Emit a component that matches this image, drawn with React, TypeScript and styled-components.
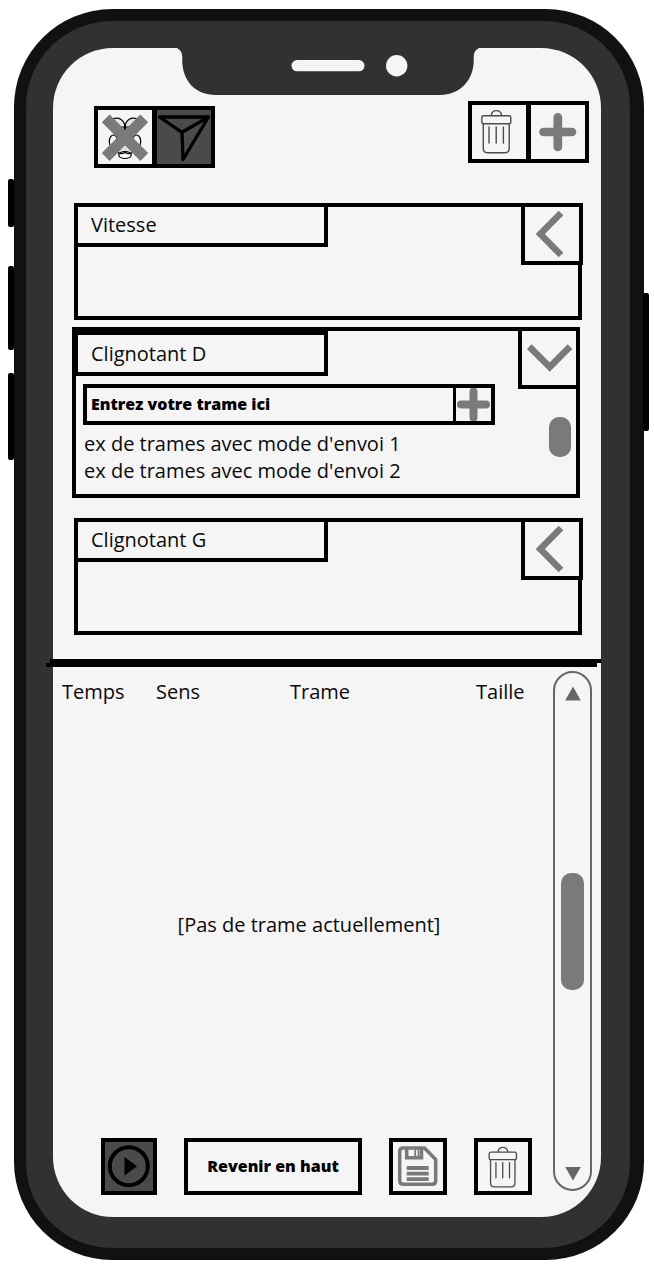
import React, { useState } from "react";
import styled, { createGlobalStyle } from "styled-components";

const GlobalStyle = createGlobalStyle`
  *, *::before, *::after { box-sizing: border-box; }
  body {
    margin: 0;
    background: #ffffff;
    color: #0a0a0a;
    font-family: "Open Sans", "Noto Sans", sans-serif;
    font-size: 20px;
    line-height: 27px;
  }
  button, input { font: inherit; color: inherit; }
`;

const GREY = "#7a7a7a";
const PAPER = "#f5f5f5";

const Page = styled.div`
  padding: 9px 10px 8px 14px;
`;

const Phone = styled.div`
  position: relative;
  border-radius: 98px;
  background: #111111;
  padding: 12px 14px 12px 12px;
`;

const Bezel = styled.div`
  border-radius: 86px;
  background: #313131;
  padding: 27px 29px 31px 27px;
`;

const SideKey = styled.span<{ $side: "left" | "right"; $top: number; $height: number }>`
  position: absolute;
  ${(p) => p.$side}: ${(p) => (p.$side === "left" ? -6 : -5)}px;
  top: ${(p) => p.$top}px;
  width: 6px;
  height: ${(p) => p.$height}px;
  border-radius: 2px;
  background: #000000;
`;

const Screen = styled.main`
  display: flex;
  flex-direction: column;
  border-radius: 60px;
  background: ${PAPER};
`;

const NotchArt = styled.svg`
  display: block;
  align-self: center;
  width: 308px;
  height: 47px;
  overflow: visible;
`;

const Toolbar = styled.header`
  display: flex;
  justify-content: space-between;
  align-items: flex-start;
  padding: 6px 12px 35px 41px;
`;

const ToolGroup = styled.div<{ $lowered?: boolean }>`
  display: flex;
  padding-top: ${(p) => (p.$lowered ? 5 : 0)}px;
  & > button + button { margin-left: -3px; }
`;

const IconButton = styled.button<{ $width?: number; $height?: number; $dark?: boolean }>`
  flex: none;
  display: block;
  width: ${(p) => p.$width ?? 62}px;
  height: ${(p) => p.$height ?? 62}px;
  padding: 0;
  border: 4px solid #000000;
  background: ${(p) => (p.$dark ? "#4a4a4a" : PAPER)};
  cursor: pointer;
  & > svg { display: block; width: 100%; height: 100%; }
`;

const CardList = styled.section`
  display: flex;
  flex-direction: column;
  padding: 0 19px 24px 21px;
`;

const Card = styled.article<{ $open: boolean }>`
  min-height: ${(p) => (p.$open ? 171 : 117)}px;
  margin: ${(p) => (p.$open ? "7px 2px 20px -2px" : "0")};
  border: 4px solid #000000;
`;

const CardHead = styled.div<{ $open: boolean }>`
  display: flex;
  justify-content: space-between;
  align-items: flex-start;
  height: ${(p) => (p.$open ? 53 : 58)}px;
  margin: ${(p) => (p.$open ? "-4px -4px 0 -2px" : "-4px -5px 0 -4px")};
`;

const CardTitle = styled.h2<{ $open: boolean }>`
  width: 254px;
  margin: ${(p) => (p.$open ? 4 : 0)}px 0 0;
  padding: 5px 13px;
  border: 4px solid #000000;
  font-size: 20px;
  font-weight: 400;
  line-height: ${(p) => (p.$open ? 27 : 26)}px;
`;

const CardBody = styled.div`
  display: flex;
  justify-content: space-between;
  padding: 4px 5px 8px 7px;
`;

const FrameColumn = styled.div`
  flex: 1;
  max-width: 412px;
`;

const FrameEntry = styled.div`
  display: flex;
  height: 41px;
  border: 4px solid #000000;
`;

const FrameInput = styled.input`
  flex: 1;
  min-width: 0;
  padding: 0 4px;
  border: 0;
  outline: 0;
  background: transparent;
  font-size: 16px;
  font-weight: 800;
  &::placeholder { color: #000000; opacity: 1; }
`;

const AddFrame = styled.button`
  flex: none;
  width: 38px;
  padding: 0;
  border: 0;
  border-left: 3px solid #000000;
  background: ${PAPER};
  & > svg { display: block; width: 100%; height: 100%; }
`;

const Examples = styled.ul`
  margin: 5px 0 0;
  padding: 0 0 0 1px;
  list-style: none;
`;

const CardThumb = styled.span`
  width: 22px;
  height: 40px;
  margin-top: 33px;
  border-radius: 10px;
  background: ${GREY};
`;

const Divider = styled.div`
  margin: 0 0 4px -7px;
  &::before, &::after {
    content: "";
    display: block;
    height: 4px;
    background: #000000;
  }
  &::before { margin-left: 4px; }
  &::after { margin-right: 4px; }
`;

const LogPanel = styled.section`
  display: flex;
  min-height: 520px;
  padding: 0 9px;
  margin-bottom: 26px;
`;

const LogMain = styled.div`
  flex: 1;
  display: flex;
  flex-direction: column;
`;

const LogTable = styled.table`
  flex: 1;
  width: 100%;
  table-layout: fixed;
  border-collapse: collapse;
`;

const Th = styled.th<{ $width?: number }>`
  width: ${(p) => (p.$width ? `${p.$width}px` : "auto")};
  height: 41px;
  padding: 0;
  font-weight: 400;
  text-align: left;
`;

const Empty = styled.td`
  height: 426px;
  padding: 0 0 2px 3px;
  text-align: center;
`;

const Footer = styled.footer`
  display: flex;
  justify-content: space-between;
  padding: 0 21px 0 39px;
  margin-bottom: -4px;
`;

const TopButton = styled.button`
  width: 178px;
  height: 57px;
  padding: 0;
  border: 4px solid #000000;
  background: ${PAPER};
  color: #000000;
  font-size: 16px;
  font-weight: 800;
`;

const ScrollRail = styled.div`
  flex: none;
  display: flex;
  flex-direction: column;
  align-items: center;
  justify-content: space-between;
  width: 39px;
  border: 2px solid #666666;
  border-radius: 20px;
`;

const ArrowButton = styled.button`
  display: block;
  width: 30px;
  height: 34px;
  padding: 0;
  border: 0;
  background: transparent;
  & > svg { display: block; }
`;

const RailThumb = styled.span`
  width: 23px;
  height: 117px;
  border-radius: 10px;
  background: ${GREY};
`;

function Notch() {
  return (
    <NotchArt viewBox="173 48 308 47" aria-hidden="true">
      <path
        d="M174 47.500C179 48 182 51 182.300 57C181 79 194 95 216 95H440C461 95 475 79 473.700 57C473.800 51 477 48 482 47.500Z"
        fill="#313131"
      />
      <rect x="291.500" y="60" width="73" height="11.300" rx="5.600" fill={PAPER} />
      <circle cx="396.700" cy="65.700" r="10.700" fill={PAPER} />
    </NotchArt>
  );
}

function CrossedBerryIcon() {
  return (
    <svg viewBox="4 4 54 54" fill="none">
      <g stroke="#000" strokeWidth="1.200">
        <path d="M31 21C30.500 14 25 10.500 19 12.800C20 19 25 22 31 21Z" fill="#e6e6e6" />
        <path d="M31 21C31.500 14 37 10.500 43 12.800C42 19 37 22 31 21Z" fill="#e6e6e6" />
        <path d="M31 18V24" strokeWidth="2" />
        <ellipse cx="19.500" cy="35.500" rx="4.200" ry="6.500" />
        <ellipse cx="42.500" cy="35.500" rx="4.200" ry="6.500" />
        <path d="M24 47L31 41L38 47Z" fill="#dcdcdc" stroke="none" />
        <ellipse cx="31" cy="49" rx="6.200" ry="3.500" />
        <path d="M23 46Q26 49 31 46.500Q36 49 39 46" />
      </g>
      <path d="M11.700 12.300L50.300 51M50.300 12.300L11.700 51" stroke={GREY} strokeWidth="11" />
    </svg>
  );
}

function SendIcon() {
  return (
    <svg viewBox="4 4 54 54" fill="none" stroke="#000" strokeWidth="3.300" strokeLinejoin="round" strokeLinecap="round">
      <path d="M6.500 11H55.500L30 53.500L29 26.300ZM29 26.300L55.500 11" />
    </svg>
  );
}

function TrashIcon({ box = "4 4 54 54" }: { box?: string }) {
  return (
    <svg viewBox={box} fill="none" stroke="#4d4d4d" strokeWidth="1.400" strokeLinecap="round">
      <path d="M23.300 14.500C23.800 8 33 8 33.600 14.500" />
      <rect x="13.800" y="14.700" width="29" height="8" rx="2" />
      <path d="M15.300 22.700V47.500Q15.300 51.700 19.500 51.700H37Q41.200 51.700 41.200 47.500V22.700" />
      <path d="M21 26V42M28.200 26V42M35.400 26V42" />
    </svg>
  );
}

function PlusIcon() {
  return (
    <svg viewBox="4 4 54 54" stroke={GREY} strokeWidth="8.700" strokeLinecap="round">
      <path d="M16.500 31H45M30.800 16.300V46" />
    </svg>
  );
}

function SmallPlusIcon() {
  return (
    <svg viewBox="0 0 35 33" stroke={GREY} strokeWidth="8" strokeLinecap="round">
      <path d="M5 16.500H30M17.500 3.500V29.500" />
    </svg>
  );
}

function ChevronIcon({ open }: { open: boolean }) {
  return (
    <svg viewBox="4 4 54 54" fill="none" stroke={GREY} strokeWidth="6.600">
      <path d={open ? "M11.300 19.700L31.700 40L52 19.700" : "M40 10L19.300 31L40 52"} />
    </svg>
  );
}

function PlayIcon() {
  return (
    <svg viewBox="4 4 48 49">
      <circle cx="27.800" cy="28.200" r="19" fill="none" stroke="#000" strokeWidth="4" />
      <path d="M23.500 19L36 28.200L23.500 37.500Z" fill="#000" />
    </svg>
  );
}

function SaveIcon() {
  return (
    <svg viewBox="4 4 50 49" fill="none" stroke={GREY}>
      <path
        d="M14 10H35.500L46.700 21.500V42.500Q46.700 46.300 43 46.300H14.500Q10.700 46.300 10.700 42.500V13.500Q10.700 10 14 10Z"
        strokeWidth="3.500"
      />
      <path d="M17.700 10V19.700H32.500V10" strokeWidth="3.500" />
      <path d="M26.200 10V19M29.500 10V19" strokeWidth="1.800" />
      <path d="M17.700 30H39.700M17.700 35.700H39.700M17.700 41.200H39.700" strokeWidth="3.800" />
    </svg>
  );
}

const examples = ["ex de trames avec mode d'envoi 1", "ex de trames avec mode d'envoi 2"];

function SignalCard({ title, initiallyOpen = false }: { title: string; initiallyOpen?: boolean }) {
  const [open, setOpen] = useState(initiallyOpen);
  return (
    <Card $open={open}>
      <CardHead $open={open}>
        <CardTitle $open={open}>{title}</CardTitle>
        <IconButton
          type="button"
          aria-label={title}
          aria-expanded={open}
          onClick={() => setOpen(!open)}
        >
          <ChevronIcon open={open} />
        </IconButton>
      </CardHead>
      {open && (
        <CardBody>
          <FrameColumn>
            <FrameEntry>
              <FrameInput aria-label="Entrez votre trame ici" placeholder="Entrez votre trame ici" />
              <AddFrame type="button" aria-label="Ajouter la trame">
                <SmallPlusIcon />
              </AddFrame>
            </FrameEntry>
            <Examples>
              {examples.map((text) => (
                <li key={text}>{text}</li>
              ))}
            </Examples>
          </FrameColumn>
          <CardThumb />
        </CardBody>
      )}
    </Card>
  );
}

export default function App() {
  return (
    <>
      <GlobalStyle />
      <Page>
        <Phone>
          <SideKey $side="left" $top={170} $height={48} />
          <SideKey $side="left" $top={257} $height={84} />
          <SideKey $side="left" $top={364} $height={87} />
          <SideKey $side="right" $top={284} $height={138} />
          <Bezel>
            <Screen>
              <Notch />
              <Toolbar>
                <ToolGroup $lowered>
                  <IconButton type="button" aria-label="Raspberry Pi déconnecté">
                    <CrossedBerryIcon />
                  </IconButton>
                  <IconButton type="button" aria-label="Envoyer" $dark>
                    <SendIcon />
                  </IconButton>
                </ToolGroup>
                <ToolGroup>
                  <IconButton type="button" aria-label="Supprimer">
                    <TrashIcon />
                  </IconButton>
                  <IconButton type="button" aria-label="Ajouter">
                    <PlusIcon />
                  </IconButton>
                </ToolGroup>
              </Toolbar>

              <CardList>
                <SignalCard title="Vitesse" />
                <SignalCard title="Clignotant D" initiallyOpen />
                <SignalCard title="Clignotant G" />
              </CardList>

              <Divider />

              <LogPanel>
                <LogMain>
                  <LogTable>
                    <thead>
                      <tr>
                        <Th $width={94}>Temps</Th>
                        <Th $width={134}>Sens</Th>
                        <Th $width={186}>Trame</Th>
                        <Th>Taille</Th>
                      </tr>
                    </thead>
                    <tbody>
                      <tr>
                        <Empty colSpan={4}>[Pas de trame actuellement]</Empty>
                      </tr>
                    </tbody>
                  </LogTable>
                  <Footer>
                    <IconButton type="button" aria-label="Lecture" $dark $width={56} $height={57}>
                      <PlayIcon />
                    </IconButton>
                    <TopButton type="button">Revenir en haut</TopButton>
                    <IconButton type="button" aria-label="Enregistrer" $width={58} $height={57}>
                      <SaveIcon />
                    </IconButton>
                    <IconButton type="button" aria-label="Effacer les trames" $width={58} $height={57}>
                      <TrashIcon box="2 4 53 52" />
                    </IconButton>
                  </Footer>
                </LogMain>
                <ScrollRail>
                  <ArrowButton type="button" aria-label="Défiler vers le haut">
                    <svg width="30" height="34" viewBox="0 0 30 34">
                      <path d="M15 13.500L22.800 27.500H7.200Z" fill="#666" />
                    </svg>
                  </ArrowButton>
                  <RailThumb />
                  <ArrowButton type="button" aria-label="Défiler vers le bas">
                    <svg width="30" height="34" viewBox="0 0 30 34">
                      <path d="M15 25.500L22.800 12H7.200Z" fill="#666" />
                    </svg>
                  </ArrowButton>
                </ScrollRail>
              </LogPanel>
            </Screen>
          </Bezel>
        </Phone>
      </Page>
    </>
  );
}
